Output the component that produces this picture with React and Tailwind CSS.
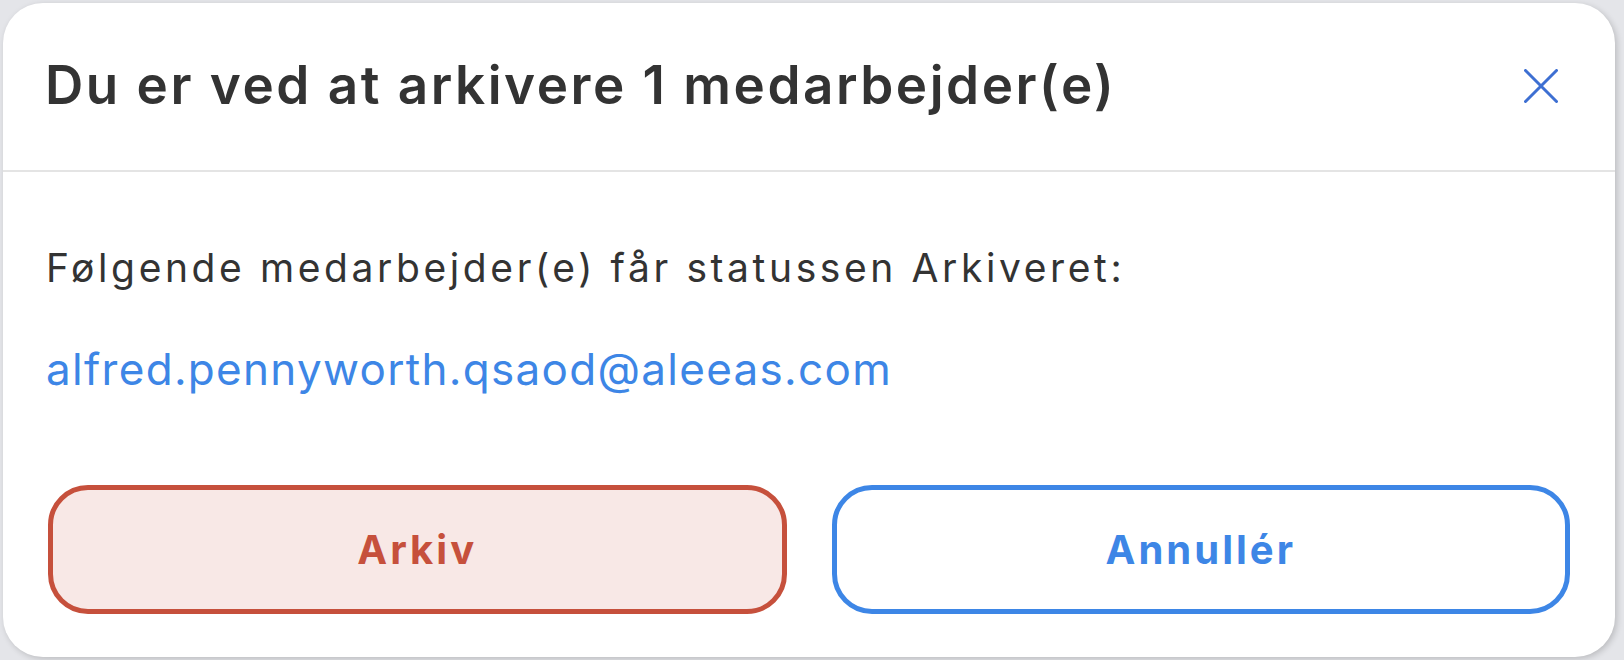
import { useState } from 'react';

const FONT = { fontFamily: 'Inter, "Noto Sans", sans-serif' };

function CloseIcon() {
  return (
    <svg width="34" height="34" viewBox="0 0 34 34" fill="none">
      <path d="M1.5 1.5L32.5 32.5M32.5 1.5L1.5 32.5" stroke="#3d6fd2" strokeWidth="3" strokeLinecap="round" />
    </svg>
  );
}

export default function App() {
  const [open, setOpen] = useState(true);

  return (
    <div className="w-[1624px] h-[660px] bg-[#e4e5e9] p-[3px] pr-[9px]" style={FONT}>
      <div className="h-[654px] bg-white rounded-[40px] shadow-[2px_2px_6px_rgba(0,0,0,0.18)] flex flex-col">
        {/* header */}
        <div className="h-[169px] shrink-0 flex items-center justify-between pl-[42px] pr-[57px] pb-[2px] border-b-2 border-[#e4e4e4]">
          <h1 className="text-[53px] font-semibold text-[#333333] leading-none tracking-[2.5px]">
            Du er ved at arkivere 1 medarbejder(e)
          </h1>
          <button onClick={() => setOpen(!open)} className="w-[34px] h-[34px] flex items-center justify-center">
            <CloseIcon />
          </button>
        </div>

        {/* body */}
        <div className="flex-1 flex flex-col px-[45px] pt-[74px]">
          <p className="-ml-[2px] text-[39px] leading-[44px] text-[#333333] tracking-[3.6px]">
            Følgende medarbejder(e) får statussen Arkiveret:
          </p>
          <p className="-ml-[2px] mt-[53px] text-[44px] leading-[52px] text-[#3d86e6] tracking-[1.3px]">
            alfred.pennyworth.qsaod@aleeas.com
          </p>

          <div className="mt-auto mb-[43px] grid grid-cols-2 gap-[45px]">
            <button className="h-[129px] rounded-[40px] border-[5px] border-[#c6503c] bg-[#f8e8e6] text-[#c6503c] text-[40px] font-bold tracking-[3px]">
              Arkiv
            </button>
            <button className="h-[129px] rounded-[40px] border-[5px] border-[#3d86e6] bg-white text-[#3d86e6] text-[40px] font-bold tracking-[3px]">
              Annullér
            </button>
          </div>
        </div>
      </div>
    </div>
  );
}
